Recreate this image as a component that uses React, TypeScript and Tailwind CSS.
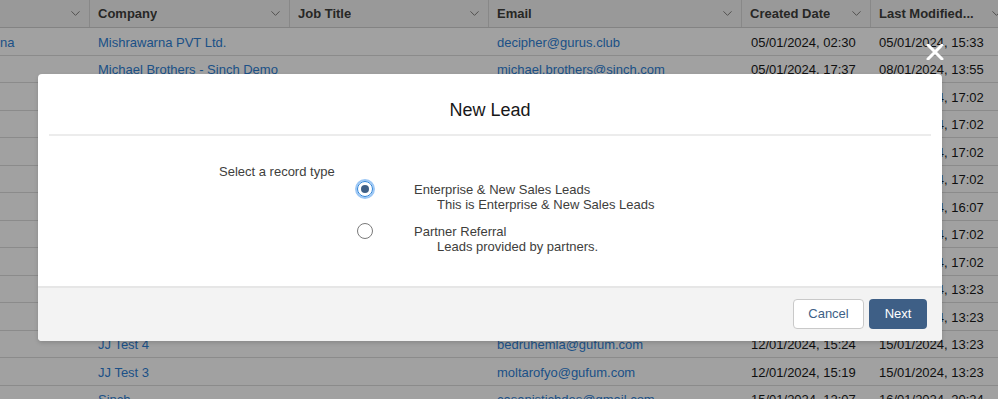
import { ChevronDown } from 'lucide-react'

type Row = {
  first: string
  company: string
  email: string
  created: string
  modified: string
}

const rows: Row[] = [
  { first: 'na', company: 'Mishrawarna PVT Ltd.', email: 'decipher@gurus.club', created: '05/01/2024, 02:30', modified: '05/01/2024, 15:33' },
  { first: '', company: 'Michael Brothers - Sinch Demo', email: 'michael.brothers@sinch.com', created: '05/01/2024, 17:37', modified: '08/01/2024, 13:55' },
  { first: '', company: 'Sinch Demo', email: 'demo1@sinch.com', created: '05/01/2024, 17:02', modified: '05/01/2024, 17:02' },
  { first: '', company: 'Sinch Demo', email: 'demo2@sinch.com', created: '05/01/2024, 17:02', modified: '05/01/2024, 17:02' },
  { first: '', company: 'Sinch Demo', email: 'demo3@sinch.com', created: '05/01/2024, 17:02', modified: '05/01/2024, 17:02' },
  { first: '', company: 'Sinch Demo', email: 'demo4@sinch.com', created: '05/01/2024, 17:02', modified: '05/01/2024, 17:02' },
  { first: '', company: 'Sinch Demo', email: 'demo5@sinch.com', created: '05/01/2024, 17:02', modified: '09/01/2024, 16:07' },
  { first: '', company: 'Sinch Demo', email: 'demo6@sinch.com', created: '05/01/2024, 17:02', modified: '05/01/2024, 17:02' },
  { first: '', company: 'Sinch Demo', email: 'demo7@sinch.com', created: '05/01/2024, 17:02', modified: '05/01/2024, 17:02' },
  { first: '', company: 'JJ Test 6', email: 'test6@gufum.com', created: '12/01/2024, 15:30', modified: '15/01/2024, 13:23' },
  { first: '', company: 'JJ Test 5', email: 'test5@gufum.com', created: '12/01/2024, 15:27', modified: '15/01/2024, 13:23' },
  { first: '', company: 'JJ Test 4', email: 'bedruhemla@gufum.com', created: '12/01/2024, 15:24', modified: '15/01/2024, 13:23' },
  { first: '', company: 'JJ Test 3', email: 'moltarofyo@gufum.com', created: '12/01/2024, 15:19', modified: '15/01/2024, 13:23' },
  { first: '', company: 'Sinch', email: 'casanistichdes@gmail.com', created: '15/01/2024, 12:07', modified: '16/01/2024, 20:24' },
]

const cols = [
  { label: '', w: 'w-[90px]' },
  { label: 'Company', w: 'w-[200px]' },
  { label: 'Job Title', w: 'w-[199px]' },
  { label: 'Email', w: 'w-[253px]' },
  { label: 'Created Date', w: 'w-[129px]' },
  { label: 'Last Modified...', w: 'w-[140px]' },
]

function HeaderCell({ label, w }: { label: string; w: string }) {
  return (
    <div className={`${w} shrink-0 h-full flex items-center justify-between pl-[8px] pr-[6px] border-r border-[#d8d8d8]`}>
      <span className="font-bold text-[13px] text-[#3e3e3c] truncate">{label}</span>
      <ChevronDown size={15} strokeWidth={1.4} className="text-[#706e6b] shrink-0" />
    </div>
  )
}

function Radio({ checked }: { checked: boolean }) {
  if (checked) {
    return (
      <svg width="20" height="20" viewBox="0 0 20 20" className="shrink-0">
        <circle cx="10" cy="10" r="9" fill="none" stroke="#9cc7f5" strokeWidth="2" />
        <circle cx="10" cy="10" r="7.5" fill="#fff" stroke="#2e84d8" strokeWidth="1" />
        <circle cx="10" cy="10" r="4" fill="#3e5f86" />
      </svg>
    )
  }
  return (
    <svg width="20" height="20" viewBox="0 0 20 20" className="shrink-0">
      <circle cx="10" cy="10" r="7.5" fill="#fff" stroke="#7a7a7a" strokeWidth="1" />
    </svg>
  )
}

function RecordOption({ checked, title, desc }: { checked: boolean; title: string; desc: string }) {
  return (
    <div className="flex items-start">
      <div className="-mt-[3px]">
        <Radio checked={checked} />
      </div>
      <div className="ml-[39px] text-[13px] leading-[15px] text-[#3e3e3c]">
        <div>{title}</div>
        <div className="pl-[23px]">{desc}</div>
      </div>
    </div>
  )
}

export default function App() {
  return (
    <div className="relative w-[998px] h-[399px] overflow-hidden bg-white font-['Liberation_Sans',Arial,sans-serif]">
      <div className="flex flex-col">
        <div className="flex h-[28px] bg-[#f3f3f3] border-b border-[#d0d0d0]">
          {cols.map((c, i) => (
            <HeaderCell key={i} label={c.label} w={c.w} />
          ))}
        </div>
        {rows.map((r, i) => (
          <div key={i} className="flex h-[27.5px] items-center pt-[2px] border-b border-[#dcdcdc] text-[13px] text-[#181818]">
            <div className="w-[90px] shrink-0 text-[#2e7fd6]">{r.first}</div>
            <div className="w-[200px] shrink-0 pl-[8px] text-[#2e7fd6] truncate">{r.company}</div>
            <div className="w-[199px] shrink-0"></div>
            <div className="w-[253px] shrink-0 pl-[8px] text-[#2e7fd6] truncate">{r.email}</div>
            <div className="w-[129px] shrink-0 pl-[9px]">{r.created}</div>
            <div className="w-[140px] shrink-0 pl-[8px] whitespace-nowrap">{r.modified}</div>
          </div>
        ))}
      </div>

      <div className="absolute inset-0 bg-[rgba(0,0,0,0.37)]"></div>

      <button className="absolute left-[925px] top-[42px] w-[20px] h-[20px] flex items-center justify-center">
        <svg width="18" height="16" viewBox="0 0 18 16">
          <path d="M2 1 L16 15 M16 1 L2 15" stroke="#fff" strokeWidth="3" strokeLinecap="round" />
        </svg>
      </button>

      <div className="absolute left-[38px] top-[74px] w-[904px] rounded-[4px] bg-white shadow-[0_2px_4px_rgba(0,0,0,0.15)] overflow-hidden flex flex-col">
        <div className="mx-[11px] h-[62px] flex items-center justify-center border-b-2 border-[#ececec]">
          <h2 className="text-[18px] text-[#181818] pt-[12px]">New Lead</h2>
        </div>
        <div className="h-[150px] pt-[27px]">
          <div className="pl-[181px] text-[13px] leading-[18px] text-[#3e3e3c]">Select a record type</div>
          <div className="pl-[317px] pt-[1px] flex flex-col gap-[12px]">
            <RecordOption checked title="Enterprise & New Sales Leads" desc="This is Enterprise & New Sales Leads" />
            <RecordOption checked={false} title="Partner Referral" desc="Leads provided by partners." />
          </div>
        </div>
        <div className="h-[55px] bg-[#f3f3f3] border-t-2 border-[#e6e6e6] flex items-center justify-end gap-[5px] pr-[15px] pb-[2px]">
          <button className="h-[30px] w-[71px] rounded-[4px] border border-[#c9c9c9] bg-white text-[13px] text-[#3e5f86]">Cancel</button>
          <button className="h-[30px] w-[58px] rounded-[4px] bg-[#3e5f86] text-[13px] text-white">Next</button>
        </div>
      </div>
    </div>
  )
}
